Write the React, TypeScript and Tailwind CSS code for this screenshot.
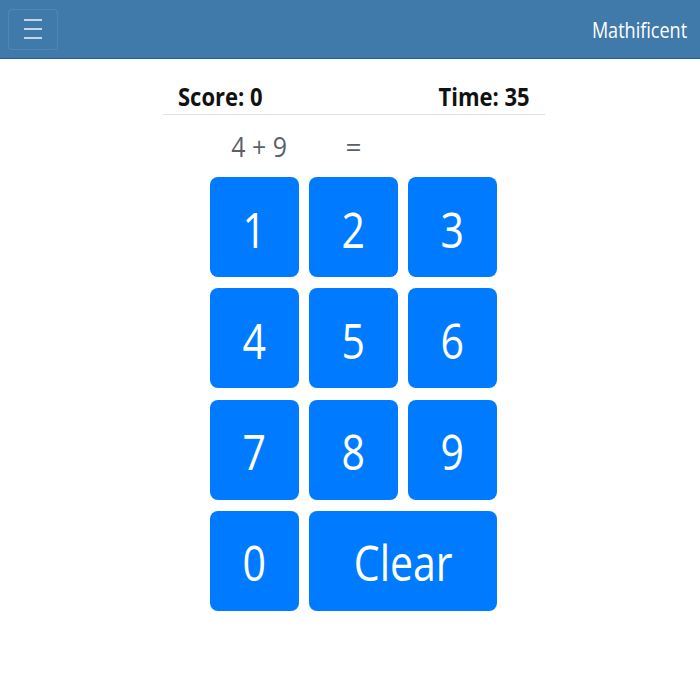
import React from "react";

const font = { fontFamily: '"Open Sans", "Noto Sans", sans-serif' };

function Key({ label, wide }: { label: string; wide?: boolean }) {
  return (
    <button
      className={`h-[100px] rounded-lg bg-[#007bff] text-white flex items-center justify-center pt-[3px] ${wide ? "col-span-2" : ""}`}
    >
      <span className="inline-block scale-x-[0.82] text-[50px] leading-none">{label}</span>
    </button>
  );
}

export default function App() {
  return (
    <div className="w-[700px] h-[700px] bg-white" style={font}>
      <nav className="h-[59px] bg-[#3f7aab] border-b border-[#1d5f9e] flex items-center justify-between pl-2 pr-[13px]">
        <button className="w-[50px] h-[41px] rounded border border-white/10 flex flex-col items-center justify-center gap-[7px]">
          <span className="block w-[18px] h-[2px] bg-white/70" />
          <span className="block w-[18px] h-[2px] bg-white/70" />
          <span className="block w-[18px] h-[2px] bg-white/70" />
        </button>
        <span className="inline-block origin-right scale-x-[0.82] text-[22px] text-white leading-none">Mathificent</span>
      </nav>
      <div className="w-[382px] ml-[163px]">
        <div className="h-[56px] border-b border-[#dee2e6] flex items-end justify-between px-[15px] pb-[3px]">
          <span className="inline-block origin-left scale-x-[0.88] text-[25px] font-bold text-[#111] leading-[30px]">Score: 0</span>
          <span className="inline-block origin-right scale-x-[0.88] text-[25px] font-bold text-[#111] leading-[30px]">Time: 35</span>
        </div>
        <div className="w-[287px] ml-[47px] grid grid-cols-[89px_89px_89px] gap-x-[10px] h-[62px] items-center">
          <span className="inline-block pl-[24px] origin-left scale-x-[0.89] text-[28px] text-[#5a6068] leading-none">4 + 9</span>
          <span className="text-center text-[28px] text-[#5a6068] leading-none">=</span>
          <span />
        </div>
        <div className="w-[287px] ml-[47px] grid grid-cols-[89px_89px_89px] gap-x-[10px] gap-y-[11.3px]">
          {["1", "2", "3", "4", "5", "6", "7", "8", "9", "0"].map((n) => (
            <Key key={n} label={n} />
          ))}
          <Key label="Clear" wide />
        </div>
      </div>
    </div>
  );
}
